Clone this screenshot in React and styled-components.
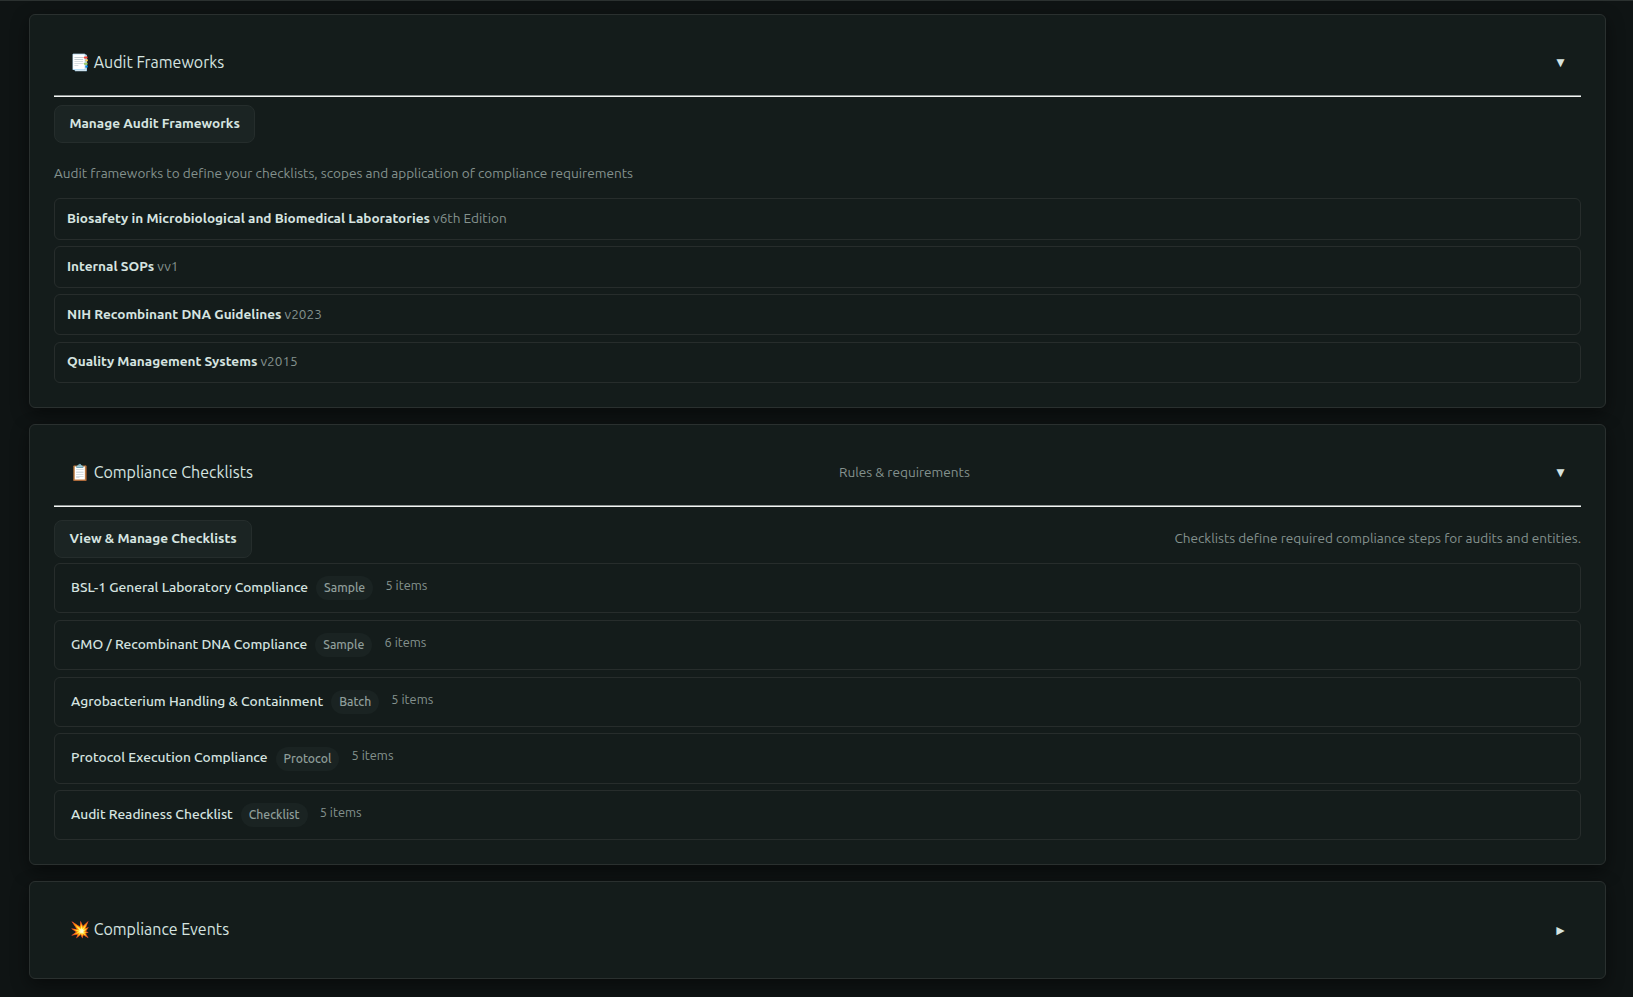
import styled, { createGlobalStyle } from "styled-components";

const frameworks = [
  { name: "Biosafety in Microbiological and Biomedical Laboratories", version: "v6th Edition" },
  { name: "Internal SOPs", version: "vv1" },
  { name: "NIH Recombinant DNA Guidelines", version: "v2023" },
  { name: "Quality Management Systems", version: "v2015" },
];

const checklists = [
  { name: "BSL-1 General Laboratory Compliance", tag: "Sample", items: 5 },
  { name: "GMO / Recombinant DNA Compliance", tag: "Sample", items: 6 },
  { name: "Agrobacterium Handling & Containment", tag: "Batch", items: 5 },
  { name: "Protocol Execution Compliance", tag: "Protocol", items: 5 },
  { name: "Audit Readiness Checklist", tag: "Checklist", items: 5 },
];

export default function App() {
  return (
    <>
      <GlobalStyle />
      <Page>
        <Panel>
          <PanelHeader>
            <PanelTitle>📑 Audit Frameworks</PanelTitle>
            <Arrow>▼</Arrow>
          </PanelHeader>
          <Divider />
          <Button>Manage Audit Frameworks</Button>
          <Description>
            Audit frameworks to define your checklists, scopes and application
            of compliance requirements
          </Description>
          <FrameworkList>
            {frameworks.map((framework) => (
              <FrameworkRow key={framework.name}>
                <strong>{framework.name}</strong> {framework.version}
              </FrameworkRow>
            ))}
          </FrameworkList>
        </Panel>

        <Panel>
          <PanelHeader>
            <PanelTitle>📋 Compliance Checklists</PanelTitle>
            <Muted>Rules &amp; requirements</Muted>
            <Arrow>▼</Arrow>
          </PanelHeader>
          <Divider />
          <Toolbar>
            <Button>View &amp; Manage Checklists</Button>
            <Muted>
              Checklists define required compliance steps for audits and
              entities.
            </Muted>
          </Toolbar>
          <ChecklistList>
            {checklists.map((checklist) => (
              <ChecklistRow key={checklist.name}>
                <ChecklistName>{checklist.name}</ChecklistName>
                <Tag>{checklist.tag}</Tag>
                <ItemCount>{checklist.items} items</ItemCount>
              </ChecklistRow>
            ))}
          </ChecklistList>
        </Panel>

        <Panel>
          <PanelHeader>
            <PanelTitle>💥 Compliance Events</PanelTitle>
            <Arrow>►</Arrow>
          </PanelHeader>
        </Panel>
      </Page>
    </>
  );
}

const GlobalStyle = createGlobalStyle`
  * {
    box-sizing: border-box;
  }

  body {
    margin: 0;
    background: #0f1414;
    color: #d6e4e0;
    font-family: Ubuntu, "Noto Sans", sans-serif;
    font-size: 13.6px;
  }
`;

const Page = styled.main`
  display: flex;
  flex-direction: column;
  gap: 16px;
  height: 997px;
  padding: 13px 27px 0 29px;
  border-top: 1px solid #2b3130;
  overflow: hidden;
`;

const Panel = styled.section`
  flex-shrink: 0;
  padding: 24px;
  background: #141c1b;
  border: 1px solid #2a302f;
  border-radius: 6px;
  box-shadow: 0 6px 18px rgba(0, 0, 0, 0.45);
`;

const PanelHeader = styled.header`
  display: flex;
  align-items: center;
  justify-content: space-between;
  height: 48px;
  padding: 0 16px 1.2px;
`;

const PanelTitle = styled.h3`
  margin: 0;
  font-size: 16px;
  font-weight: 400;
`;

const Arrow = styled.span`
  display: flex;
  justify-content: center;
  width: 9px;
`;

const Divider = styled.hr`
  height: 2px;
  margin: 8px 0;
  border: 0;
  border-top: 1px solid #8f9594;
  border-bottom: 1px solid #f4f6f5;
`;

const Button = styled.button`
  display: block;
  height: 38px;
  padding: 0 14.4px 2px;
  background: #1b2423;
  border: 1px solid #252d2c;
  border-radius: 8px;
  color: inherit;
  font: inherit;
  font-weight: 600;
`;

const Description = styled.p`
  margin: 20px 0 14.4px;
  line-height: 21px;
  color: #84928e;
`;

const Muted = styled.span`
  padding-bottom: 1px;
  color: #84928e;
`;

const FrameworkList = styled.ul`
  display: flex;
  flex-direction: column;
  gap: 6.35px;
  margin: 0;
  padding: 0;
  list-style: none;
`;

const FrameworkRow = styled.li`
  height: 41.4px;
  padding: 0.8px 12px 0;
  border: 1px solid #272d2c;
  border-radius: 6px;
  line-height: 36px;
  color: #84928e;

  strong {
    color: #d6e4e0;
    font-weight: 600;
  }
`;

const Toolbar = styled.div`
  display: flex;
  align-items: center;
  justify-content: space-between;
  margin: 13px 0 5.2px;
`;

const ChecklistList = styled(FrameworkList)`
  gap: 6.45px;
`;

const ChecklistRow = styled.li`
  display: flex;
  align-items: center;
  height: 50.27px;
  padding: 0 16px;
  border: 1px solid #272d2c;
  border-radius: 6px;
`;

const ChecklistName = styled.span`
  padding-bottom: 1.9px;
  font-size: 13.77px;
  font-weight: 500;
`;

const Tag = styled.span`
  height: 24px;
  margin: 0.26px 0 0 8px;
  padding: 0 8px;
  background: #1a2322;
  border-radius: 12px;
  font-size: 12.2px;
  font-weight: 500;
  line-height: 24px;
  color: #8f9e9a;
`;

const ItemCount = styled.span`
  margin: 0 0 5.9px 12.2px;
  font-size: 12.8px;
  color: #84928e;
`;
